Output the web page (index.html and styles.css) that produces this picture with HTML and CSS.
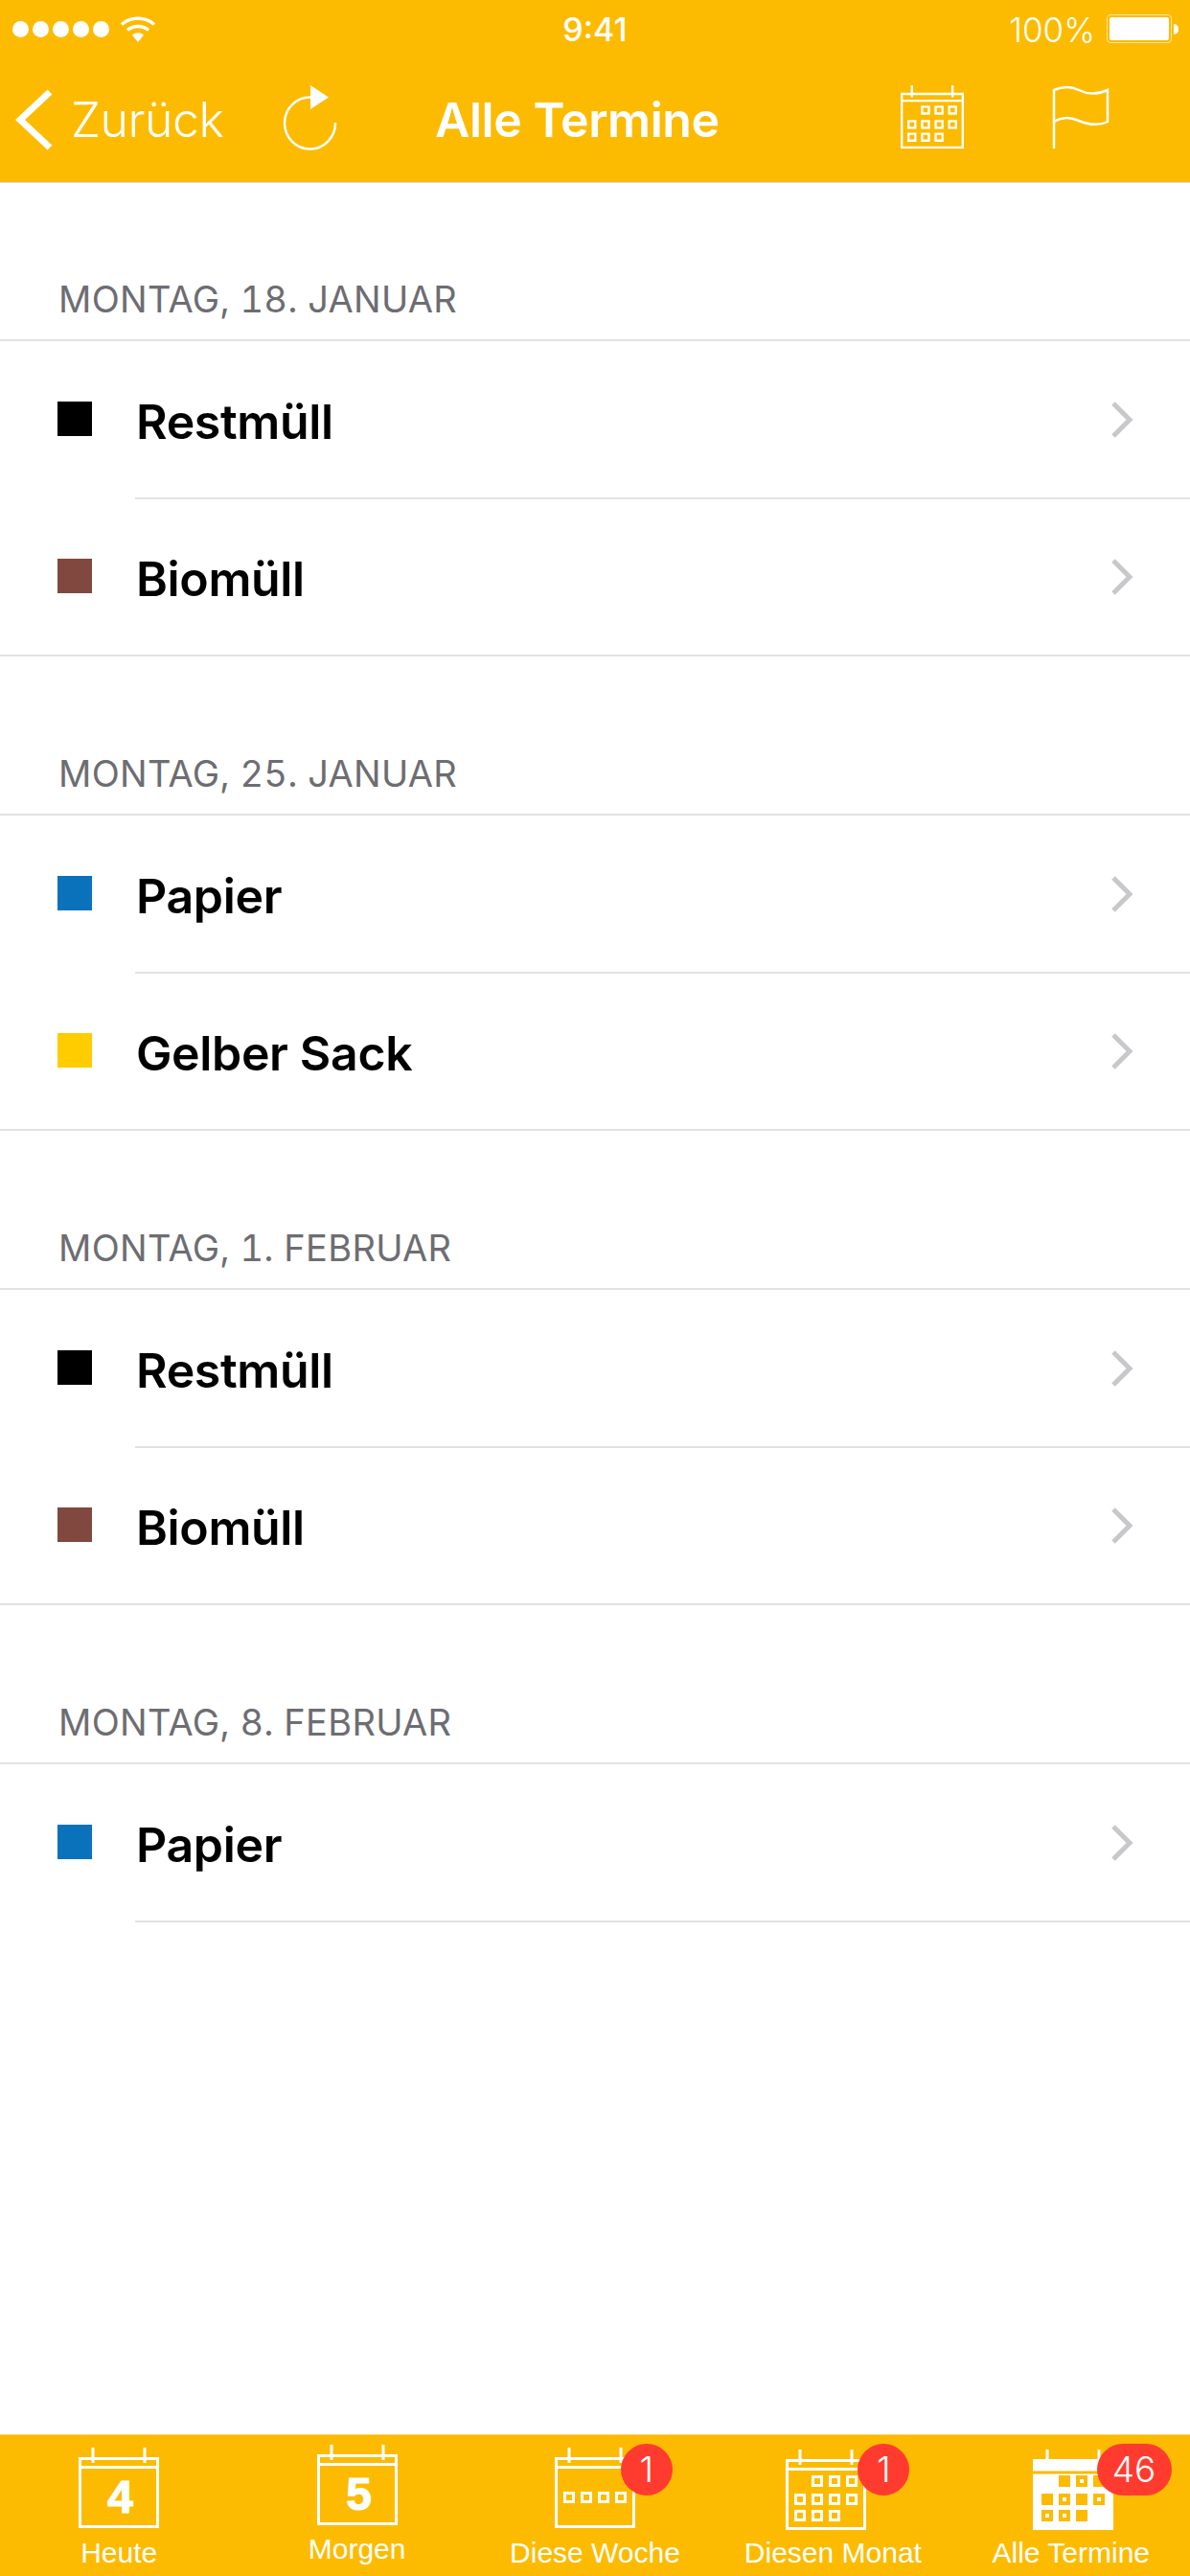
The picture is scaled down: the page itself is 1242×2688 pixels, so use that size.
FILE: index.html
```html
<!DOCTYPE html>
<html lang="de">
<head>
<meta charset="utf-8">
<title>Alle Termine</title>
<link rel="stylesheet" href="styles.css">
</head>
<body>
<svg class="defs" width="0" height="0" aria-hidden="true">
  <defs>
    <symbol id="cal-frame" viewBox="0 0 84 84">
      <path class="ln" d="M1.5 11.5H82.5V82.5H1.5ZM1.5 20.5H82.5M15 0V16M69 0V16"/>
    </symbol>
    <symbol id="cal-grid" viewBox="0 0 84 84">
      <path class="ln" d="M1.5 11.5H82.5V82.5H1.5ZM1.5 20.5H82.5M15 0V16M69 0V16"/>
      <path class="ln" d="M28.5 28.5h9v9h-9zM46.5 28.5h9v9h-9zM64.5 28.5h9v9h-9zM10.5 47.5h9v9h-9zM28.5 47.5h9v9h-9zM46.5 47.5h9v9h-9zM64.5 47.5h9v9h-9zM10.5 64.5h9v9h-9zM28.5 64.5h9v9h-9zM46.5 64.5h9v9h-9z"/>
    </symbol>
    <symbol id="chev" viewBox="0 0 24 40">
      <path d="M3 3L20 20L3 37" fill="none" stroke="#c7c7cc" stroke-width="5"/>
    </symbol>
  </defs>
</svg>

<header class="top">
  <div class="status">
    <div class="status-left">
      <span class="dot"></span><span class="dot"></span><span class="dot"></span><span class="dot"></span><span class="dot"></span>
      <svg class="wifi" viewBox="0 0 38 28">
        <path d="M2 9.5C11 1 27 1 36 9.5M8 15.5C14 10 24 10 30 15.5" fill="none" stroke="#fff" stroke-width="3.5"/>
        <path d="M13 20.5C16.5 17.5 21.5 17.5 25 20.5L19 28Z" fill="#fff"/>
      </svg>
    </div>
    <div class="clock">9:41</div>
    <div class="status-right">
      <span class="pct">100%</span>
      <span class="battery"><span class="battery-fill"></span></span>
      <span class="nub"></span>
    </div>
  </div>
  <nav class="nav">
    <svg class="back" viewBox="0 0 40 66"><path d="M36 3L5 32L36 61" fill="none" stroke="#fff" stroke-width="7"/></svg>
    <span class="back-text">Zurück</span>
    <svg class="refresh" viewBox="0 0 58 68">
      <path d="M30 12.5A26.5 27 0 1 0 56 39" fill="none" stroke="#fff" stroke-width="2.5"/>
      <path d="M30 0L49 12.5L30 25Z" fill="#fff"/>
    </svg>
    <span class="title">Alle Termine</span>
    <svg class="nav-cal"><use href="#cal-grid"/></svg>
    <svg class="flag" viewBox="0 0 60 66">
      <path d="M2 66V5C11 1 20 1 28 5S47 10 58 5V38C48 43 38 41 28 37S11 33 2 38" fill="none" stroke="#fff" stroke-width="2.5"/>
    </svg>
  </nav>
</header>

<main class="list">
  <section>
    <h2 class="date">MONTAG, 18. JANUAR</h2>
    <div class="rows">
      <div class="row"><span class="sq black"></span><span class="name">Restmüll</span><svg class="chevron"><use href="#chev"/></svg></div>
      <div class="row"><span class="sq brown"></span><span class="name">Biomüll</span><svg class="chevron"><use href="#chev"/></svg></div>
    </div>
  </section>
  <section>
    <h2 class="date">MONTAG, 25. JANUAR</h2>
    <div class="rows">
      <div class="row"><span class="sq blue"></span><span class="name">Papier</span><svg class="chevron"><use href="#chev"/></svg></div>
      <div class="row"><span class="sq yellow"></span><span class="name">Gelber Sack</span><svg class="chevron"><use href="#chev"/></svg></div>
    </div>
  </section>
  <section>
    <h2 class="date">MONTAG, 1. FEBRUAR</h2>
    <div class="rows">
      <div class="row"><span class="sq black"></span><span class="name">Restmüll</span><svg class="chevron"><use href="#chev"/></svg></div>
      <div class="row"><span class="sq brown"></span><span class="name">Biomüll</span><svg class="chevron"><use href="#chev"/></svg></div>
    </div>
  </section>
  <section>
    <h2 class="date">MONTAG, 8. FEBRUAR</h2>
    <div class="rows rows-open">
      <div class="row"><span class="sq blue"></span><span class="name">Papier</span><svg class="chevron"><use href="#chev"/></svg></div>
    </div>
  </section>
</main>

<footer class="tabs">
  <div class="tab">
    <svg class="tab-icon" viewBox="0 0 84 84">
      <use href="#cal-frame"/>
      <text class="digit" x="43.5" y="68">4</text>
    </svg>
    <span class="tab-label">Heute</span>
  </div>
  <div class="tab tab-up">
    <svg class="tab-icon" viewBox="0 0 84 84">
      <use href="#cal-frame"/>
      <text class="digit" x="43.5" y="68">5</text>
    </svg>
    <span class="tab-label">Morgen</span>
  </div>
  <div class="tab">
    <svg class="tab-icon" viewBox="0 0 84 84">
      <use href="#cal-frame"/>
      <path class="ln" d="M10.5 47.5h9v9h-9zM28.5 47.5h9v9h-9zM46.5 47.5h9v9h-9zM64.5 47.5h9v9h-9z"/>
    </svg>
    <span class="tab-label">Diese Woche</span>
    <span class="badge badge-week">1</span>
  </div>
  <div class="tab tab-down">
    <svg class="tab-icon tab-icon-month"><use href="#cal-grid"/></svg>
    <span class="tab-label">Diesen Monat</span>
    <span class="badge badge-month">1</span>
  </div>
  <div class="tab tab-down">
    <svg class="tab-icon tab-icon-all" viewBox="0 0 84 84">
      <path class="fill-w" d="M0 10H84V84H0Z"/>
      <path class="ln" d="M15 0V12M69 0V12"/>
      <path class="gap" d="M0 24H84"/>
      <path class="fill-y" d="M27 27h12v12h-12zM45 27h12v12h-12zM63 27h12v12h-12zM9 46h12v12h-12zM27 46h12v12h-12zM45 46h12v12h-12zM63 46h12v12h-12zM9 63h12v12h-12zM27 63h12v12h-12zM45 63h12v12h-12z"/>
      <path class="fill-w" d="M49 31h4v4h-4zM31 50h4v4h-4zM67 50h4v4h-4zM13 67h4v4h-4zM31 67h4v4h-4z"/>
    </svg>
    <span class="tab-label">Alle Termine</span>
    <span class="badge badge-all">46</span>
  </div>
</footer>
</body>
</html>
```

FILE: styles.css
```css
* { box-sizing: border-box; }

html, body { margin: 0; padding: 0; }

body {
  width: 1242px;
  height: 2688px;
  display: flex;
  flex-direction: column;
  background: #fff;
  font-family: Inter, "Liberation Sans", sans-serif;
  overflow: hidden;
}

.defs { position: absolute; }

.ln { fill: none; stroke: #fff; stroke-width: 3; }
.fill-w { fill: #fff; }
.fill-y { fill: #fcbb00; }
.gap { fill: none; stroke: #fcbb00; stroke-width: 3; }

/* Header */
.top {
  flex: none;
  height: 190px;
  background: #fcbb00;
  color: #fff;
  box-shadow: 0 1px 0 #d9d9d9;
  position: relative;
}

.status {
  height: 62px;
  padding: 13px 13px 0;
  display: grid;
  grid-template-columns: 1fr auto 1fr;
  align-items: start;
}

.status-left { display: flex; align-items: center; gap: 4px; height: 36px; margin-top: -1px; }
.dot { width: 17px; height: 17px; border-radius: 50%; background: #fff; }
.wifi { width: 38px; height: 28px; margin-left: 7px; }

.clock { font-size: 34px; font-weight: 500; line-height: 36px; }

.status-right { display: flex; align-items: center; justify-content: flex-end; height: 36px; margin-top: -1px; }
.pct { font-size: 35px; font-weight: 300; line-height: 36px; margin-right: 12px; margin-top: 2px; }
.battery {
  width: 68px;
  height: 30px;
  padding: 2px;
  border: 1px solid rgba(255, 255, 255, .6);
  border-radius: 4px;
  display: flex;
}
.battery-fill { flex: 1; background: #fff; border-radius: 2px; }
.nub { width: 5px; height: 11px; background: #fff; border-radius: 0 5px 5px 0; margin-left: 2px; margin-right: -1px; }

.nav {
  height: 128px;
  padding-left: 16px;
  display: flex;
  align-items: flex-start;
}

.back { width: 40px; height: 66px; margin-top: 31px; flex: none; }
.back-text { font-size: 50px; font-weight: 300; letter-spacing: -.5px; line-height: 60px; margin-left: 18px; margin-top: 33px; width: 160px; }
.refresh { width: 58px; height: 68px; margin-top: 27px; margin-left: 60px; flex: none; }
.title { font-size: 50px; font-weight: 600; letter-spacing: -.45px; line-height: 60px; margin-left: 102px; margin-top: 33px; white-space: nowrap; }
.nav-cal { width: 66px; height: 66px; margin-top: 27px; margin-left: auto; flex: none; }
.flag { width: 60px; height: 66px; margin-top: 27px; margin-left: 92px; margin-right: 84px; flex: none; }

/* List */
.list { flex: 1; min-height: 0; }

.date {
  margin: 0;
  height: 164px;
  padding: 0 0 20px 61px;
  display: flex;
  align-items: flex-end;
  font-size: 38px;
  font-weight: 400;
  font-variant-numeric: tabular-nums;
  letter-spacing: .3px;
  line-height: 44px;
  color: #6d6d72;
}

.rows { border-top: 2px solid #e2e2e4; }

.row {
  height: 164.5px;
  padding: 0 59px 0 60px;
  display: flex;
  align-items: center;
  border-bottom: 2px solid #e2e2e4;
  position: relative;
}

.row:not(:last-child) { border-bottom: 0; }

.row:not(:last-child)::after,
.rows-open .row::after {
  content: "";
  position: absolute;
  left: 141px;
  right: 0;
  bottom: 0;
  height: 2px;
  background: #e2e2e4;
}

.rows-open .row { border-bottom: 0; }

.sq { width: 36px; height: 36px; margin-top: -2px; flex: none; }
.black { background: #000; }
.brown { background: #80483e; }
.blue { background: #0a72bb; }
.yellow { background: #ffcc00; }

.name { font-size: 50px; font-weight: 600; letter-spacing: -.35px; line-height: 60px; color: #000; margin-left: 46px; margin-top: 4px; }

.chevron { width: 24px; height: 40px; margin-left: auto; flex: none; }

/* Tab bar */
.tabs {
  flex: none;
  height: 147px;
  background: #fcbb00;
  box-shadow: 0 -1px 0 #fdd66b;
  display: grid;
  grid-template-columns: repeat(5, 1fr);
}

.tab {
  position: relative;
  display: flex;
  flex-direction: column;
  align-items: center;
  padding-top: 13px;
  color: #fff;
}

.tab-up { padding-top: 10px; }
.tab-down { padding-top: 15px; }

.tab-icon { width: 84px; height: 84px; flex: none; display: block; margin-bottom: 8px; }
.tab-up .tab-icon { margin-bottom: 7px; }
.tab-down .tab-icon { margin-bottom: 6px; }
.tab-icon-month { margin-right: 14px; }
.tab-icon-all { margin-left: 4px; }

.digit {
  font-family: "Liberation Sans", sans-serif;
  font-weight: 700;
  font-size: 48px;
  fill: #fff;
  stroke: #fff;
  stroke-width: 1.2;
  text-anchor: middle;
}

.tab-label {
  font-family: "Liberation Sans", Arial, sans-serif;
  font-size: 30px;
  line-height: 36px;
  white-space: nowrap;
}

.badge {
  position: absolute;
  top: 9px;
  height: 54px;
  min-width: 54px;
  border-radius: 27px;
  background: #ff3b30;
  color: #fff;
  font-family: Inter, "Liberation Sans", sans-serif;
  font-weight: 300;
  font-size: 37px;
  line-height: 54px;
  text-align: center;
}

.badge-week { left: 151px; }
.badge-month { left: 150px; }
.badge-all { left: 151px; width: 78px; }
```
